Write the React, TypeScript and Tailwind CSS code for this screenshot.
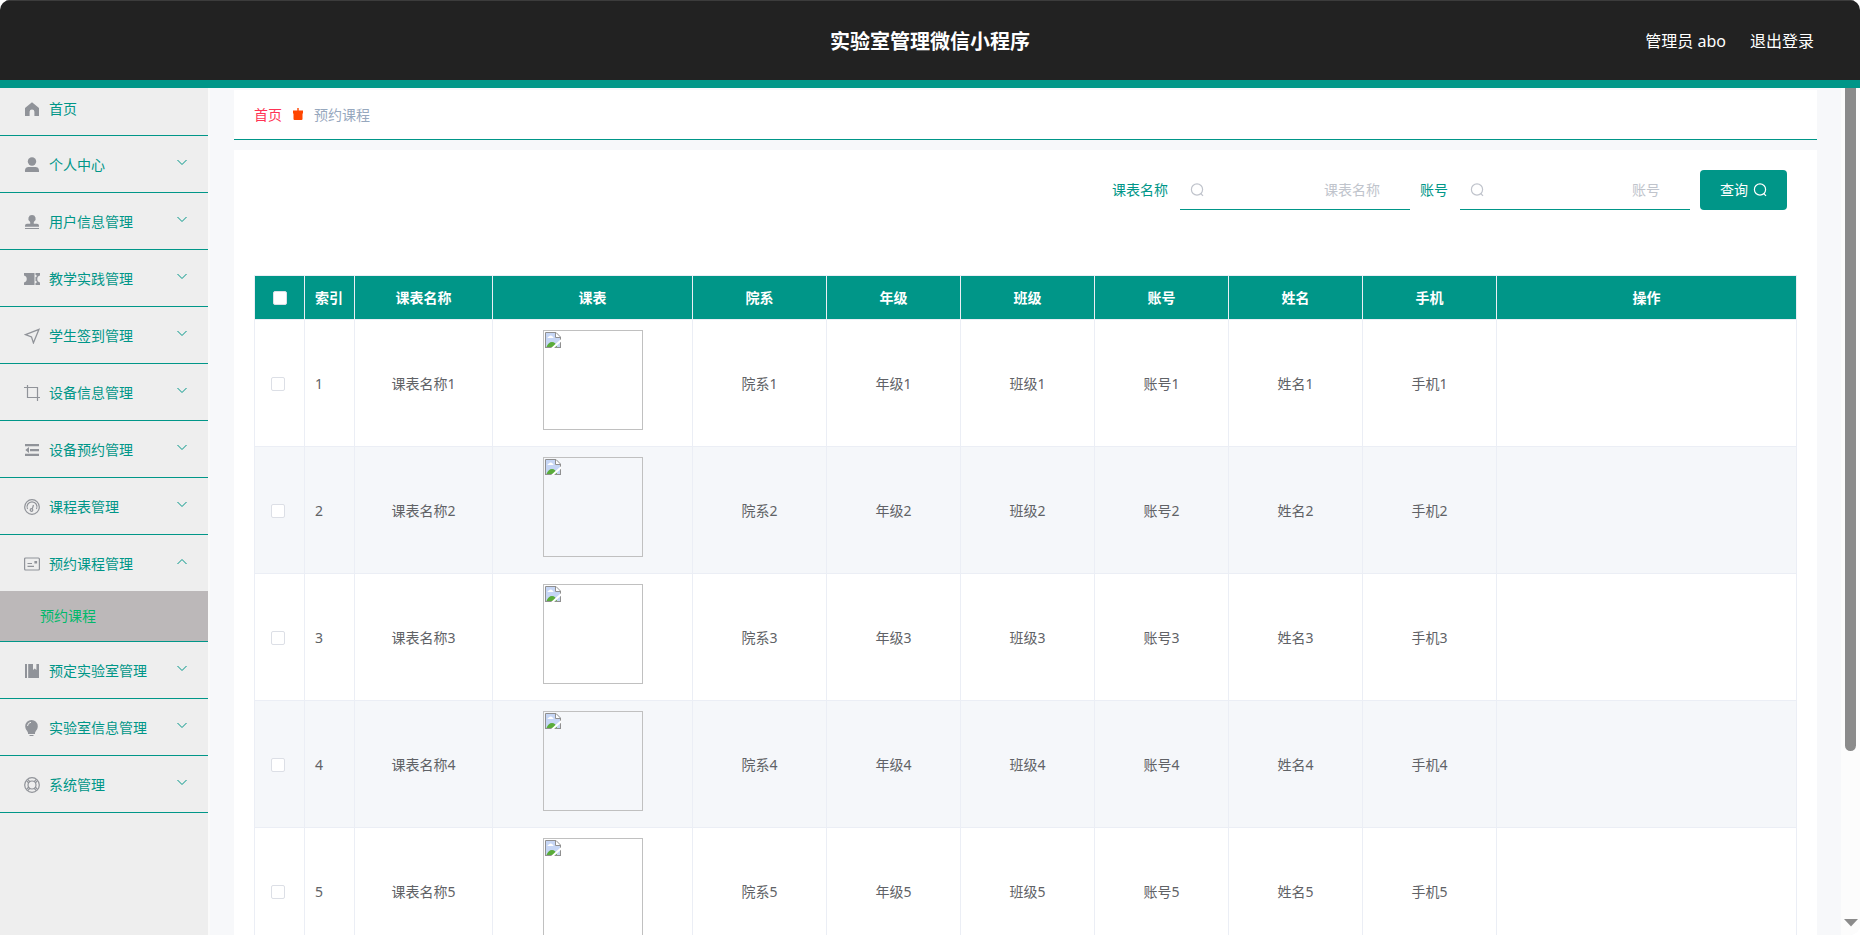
import React, { useState } from 'react';

type IconName =
  | 'home'
  | 'user'
  | 'custom'
  | 'ticket'
  | 'position'
  | 'crop'
  | 'fold'
  | 'odometer'
  | 'postcard'
  | 'management'
  | 'opportunity'
  | 'help';

interface MenuEntry {
  label: string;
  icon: IconName;
  children?: string[];
}

const menu: MenuEntry[] = [
  { label: '个人中心', icon: 'user' },
  { label: '用户信息管理', icon: 'custom' },
  { label: '教学实践管理', icon: 'ticket' },
  { label: '学生签到管理', icon: 'position' },
  { label: '设备信息管理', icon: 'crop' },
  { label: '设备预约管理', icon: 'fold' },
  { label: '课程表管理', icon: 'odometer' },
  { label: '预约课程管理', icon: 'postcard', children: ['预约课程'] },
  { label: '预定实验室管理', icon: 'management' },
  { label: '实验室信息管理', icon: 'opportunity' },
  { label: '系统管理', icon: 'help' },
];

const columns = [
  { label: '课表名称', width: 'w-[138px]' },
  { label: '课表', width: 'w-[200px]' },
  { label: '院系', width: 'w-[134px]' },
  { label: '年级', width: 'w-[134px]' },
  { label: '班级', width: 'w-[134px]' },
  { label: '账号', width: 'w-[134px]' },
  { label: '姓名', width: 'w-[134px]' },
  { label: '手机', width: 'w-[134px]' },
  { label: '操作', width: '' },
];

const rows = [1, 2, 3, 4, 5];

const shapes: Record<IconName, React.ReactNode> = {
  home: <path fill="currentColor" d="M8 1.2 1 7v8h4.6v-4.2a2.4 2.4 0 0 1 4.8 0V15H15V7z" />,
  user: (
    <g fill="currentColor">
      <circle cx="8" cy="4.5" r="4.2" />
      <path d="M1 15v-1.600C1 11.200 2.600 10 4.600 10h6.800c2 0 3.600 1.200 3.600 3.400V15z" />
    </g>
  ),
  custom: (
    <g fill="currentColor">
      <path d="M8 1a3.600 3.600 0 0 1 2.200 6.500c-.5.5-.6 1.300-.4 2.200H13a2 2 0 0 1 2 2v1H1v-1a2 2 0 0 1 2-2h3.200c.2-.9.1-1.700-.4-2.200A3.600 3.600 0 0 1 8 1z" />
      <path d="M1 14h14v1H1z" />
    </g>
  ),
  ticket: (
    <g fill="currentColor">
      <path d="M0 2h10.500v12H0v-2.500a3.600 3.600 0 0 0 0-7z" />
      <path d="M11.500 2H16v2.500a3.600 3.600 0 0 0 0 7V14h-4.500v-2h1v-2h-1V6h1V4h-1z" />
    </g>
  ),
  position: (
    <path fill="none" stroke="currentColor" strokeWidth="1.300" d="M15 1.300 1.500 6.700l6 2.200 1.900 6z" />
  ),
  crop: <path fill="none" stroke="currentColor" strokeWidth="1.200" d="M3.500 0v12.500H16M0 2.500h13.500V16" />,
  fold: (
    <g fill="currentColor">
      <path d="M1 2h14v2.200H1zM6 7h9v2.200H6zM1 11.800h14V14H1zM1.300 8l3.700-3v6z" />
    </g>
  ),
  odometer: (
    <g fill="none" stroke="currentColor" strokeWidth="1.200">
      <circle cx="8" cy="8" r="7.300" />
      <path d="M3.500 10a5 5 0 1 1 9 0" />
      <circle cx="7.500" cy="11" r="1.300" />
      <path d="M8.300 9.800 9.500 6" />
    </g>
  ),
  postcard: (
    <g fill="none" stroke="currentColor" strokeWidth="1.200">
      <rect x=".6" y="2" width="14.800" height="12" rx="1" />
      <path d="M3.500 7.500h4.500M3.500 10.300h6.500" />
      <path fill="currentColor" d="M11 5.500h1.500V7H11z" />
    </g>
  ),
  management: <path fill="currentColor" d="M1 1h2v14H1zM4.200 1H9v6l1.700-1.600L12.400 7V1H15v14H4.200z" />,
  opportunity: (
    <g>
      <path
        fill="currentColor"
        d="M7.500 0a6.300 6.300 0 0 1 6.300 6.300c0 3-1.800 4-2.800 6.400V14H4v-1.300C3 10.300 1.200 9.300 1.200 6.300A6.300 6.300 0 0 1 7.500 0zM5.500 15h4v1h-4z"
      />
      <path fill="none" stroke="#eee" d="M3.500 6a4 4 0 0 1 3.500-3.700" />
    </g>
  ),
  help: (
    <g fill="none" stroke="currentColor" strokeWidth="1.200">
      <circle cx="8" cy="8" r="7.300" />
      <circle cx="8" cy="8" r="4" />
      <path d="m2.700 4 2.200 2M4 2.700l2 2.200M13.300 4l-2.200 2M12 2.700l-2 2.200M2.700 12l2.200-2M4 13.300l2-2.200M13.300 12l-2.200-2M12 13.300l-2-2.200" />
    </g>
  ),
};

const MenuIcon = ({ name }: { name: IconName }) => (
  <svg viewBox="0 0 16 16" className="size-4 shrink-0 text-[#909399]" aria-hidden="true">
    {shapes[name]}
  </svg>
);

const SearchIcon = ({ className }: { className: string }) => (
  <svg
    viewBox="0 0 14 14"
    className={`size-3.5 ${className}`}
    fill="none"
    stroke="currentColor"
    strokeWidth="1.200"
    aria-hidden="true"
  >
    <circle cx="7" cy="6.500" r="5.600" />
    <path d="m10.700 10.500 2.300 2.300" />
  </svg>
);

const Chevron = ({ open }: { open: boolean }) => (
  <svg viewBox="0 0 12 12" className="size-3 mb-1 ml-auto" fill="none" stroke="currentColor" aria-hidden="true">
    <path d={open ? 'M1.500 8 6 3.500 10.500 8' : 'M1.500 3 6 7.500 10.500 3'} />
  </svg>
);

// Placeholder frame for a timetable picture that did not load
const BrokenImage = () => (
  <div className="size-[100px] mx-auto mb-2 p-px border border-[#c0c0c0]">
    <svg viewBox="0 0 16 16" className="size-4" aria-hidden="true">
      <path fill="#c6d6f5" d="M1 1h9.500v4.500H15V15H1z" />
      <path fill="#fff" d="M10.500 1 15 5.500h-4.500z" />
      <path fill="#fff" d="M2.500 6a1.500 1.500 0 0 1 1.500-1.500 2 2 0 0 1 3.500 0A1.500 1.500 0 0 1 8.500 6z" />
      <path fill="#5aac3a" d="M1.500 15c1-3 3-5 5.500-5s4 1.500 5 5z" />
      <path fill="none" stroke="#909090" d="M.5 16V.5H11l4.500 4.500v11M0 15.500h16M10.500.5v5h5" />
      <path stroke="#fff" strokeWidth="2" d="M7 16.500 16.500 8" />
    </svg>
  </div>
);

const Sidebar = () => {
  const [openItem, setOpenItem] = useState('预约课程管理');

  return (
    <nav className="w-[210px] shrink-0 bg-[#eee] border-r-2 border-[#fafafa] text-sm text-[#009688]">
      <ul>
        <li className="border-b border-[#009688]">
          <a href="#home" className="flex items-center h-[47px] pl-6 pb-1.5">
            <MenuIcon name="home" />
            <span className="ml-[9px]">首页</span>
          </a>
        </li>
        {menu.map((item) => {
          const isOpen = item.label === openItem;
          return (
            <li key={item.label} className="border-b border-[#009688]">
              <button
                type="button"
                aria-expanded={isOpen}
                onClick={() => setOpenItem(isOpen ? '' : item.label)}
                className="flex items-center w-full h-14 pl-6 pr-5 pt-0.5"
              >
                <MenuIcon name={item.icon} />
                <span className="ml-[9px]">{item.label}</span>
                <Chevron open={isOpen} />
              </button>
              {isOpen &&
                item.children?.map((child) => (
                  <a
                    key={child}
                    href="#course"
                    className="flex items-center h-[50px] pl-10 bg-[#bcb8b9] text-[#00b96b]"
                  >
                    {child}
                  </a>
                ))}
            </li>
          );
        })}
      </ul>
    </nav>
  );
};

const SearchField = ({ id, label }: { id: string; label: string }) => (
  <div className="flex items-center mr-2.5">
    <label htmlFor={id} className="pr-3 text-[#009688]">
      {label}
    </label>
    <div className="flex items-center w-[230px] h-10 px-2.5 border-b border-[#009688]">
      <SearchIcon className="shrink-0 text-[#c0c4cc]" />
      <input
        id={id}
        type="text"
        placeholder={label}
        className="w-full min-w-0 pr-5 text-right outline-none placeholder:text-[#c0c4cc]"
      />
    </div>
  </div>
);

const CheckBox = ({ label }: { label: string }) => (
  <input
    type="checkbox"
    aria-label={label}
    className="block size-3.5 appearance-none rounded-xs border border-[#dcdfe6] bg-white checked:bg-[#009688]"
  />
);

const CourseTable = () => (
  <table className="w-full table-fixed border-separate border-spacing-0 border-l border-t border-[#ebeef5] text-center text-[#606266]">
    <thead>
      <tr className="h-11 bg-[#009688] text-white">
        <th className="w-[50px] pl-[18px] border-r border-b border-[#ebeef5]">
          <CheckBox label="全选" />
        </th>
        <th className="w-[50px] pl-2.5 text-left border-r border-b border-[#ebeef5]">索引</th>
        {columns.map((col) => (
          <th key={col.label} className={`border-r border-b border-[#ebeef5] ${col.width}`}>
            {col.label}
          </th>
        ))}
      </tr>
    </thead>
    <tbody>
      {rows.map((n) => (
        <tr key={n} className="h-[127px] even:bg-[#f5f7fa]">
          <td className="pl-4 pt-0.5 border-r border-b border-[#ebeef5]">
            <CheckBox label={`选择第${n}行`} />
          </td>
          <td className="pl-2.5 pt-0.5 text-left border-r border-b border-[#ebeef5]">{n}</td>
          {columns.map((col) => (
            <td key={col.label} className="pt-0.5 border-r border-b border-[#ebeef5]">
              {col.label === '课表' && <BrokenImage />}
              {col.label !== '课表' && col.label !== '操作' && `${col.label}${n}`}
            </td>
          ))}
        </tr>
      ))}
    </tbody>
  </table>
);

const Header = () => (
  <header className="grid grid-cols-3 items-center h-[88px] shrink-0 bg-[#222] border-t border-t-[#3c3c3c] border-b-8 border-b-[#009688] text-white">
    <h1 className="col-start-2 pt-0.5 text-center text-xl font-bold">实验室管理微信小程序</h1>
    <div className="flex justify-end gap-6 pr-[46px] text-base">
      <span>管理员 abo</span>
      <button type="button">退出登录</button>
    </div>
  </header>
);

const App: React.FC = () => {
  return (
    <div className="h-screen bg-white">
      <div className="flex flex-col h-full overflow-hidden rounded-t-[10px] rounded-br-[10px] bg-[#f7f8fa] font-['Noto_Sans','Noto_Sans_CJK_SC',sans-serif] text-sm">
        <Header />
        <div className="flex flex-1 min-h-0">
          <Sidebar />
          <main className="flex-1 min-w-0 px-6 pt-0.5 overflow-hidden">
            <div className="flex items-center h-[50px] px-5 pt-px bg-white border-b border-[#009688]">
              <a href="#home" className="text-[#ff3355]">
                首页
              </a>
              <svg viewBox="0 0 12 14" className="w-3 h-3.5 mx-2.5" fill="#ff4500" aria-hidden="true">
                <path d="M5.300 0h1.400v2.500H11v3h-.5V11a1 1 0 0 1-1 1h-7a1 1 0 0 1-1-1V5.500H1v-3h4.300z" />
              </svg>
              <span className="text-[#97a8be]">预约课程</span>
            </div>

            <div className="mt-2.5 p-5 bg-white">
              <form className="flex justify-end pr-2.5" onSubmit={(e) => e.preventDefault()}>
                <SearchField id="course-name" label="课表名称" />
                <SearchField id="account" label="账号" />
                <button
                  type="submit"
                  className="flex items-center gap-[5px] h-10 px-5 rounded bg-[#009688] text-white"
                >
                  查询
                  <SearchIcon className="" />
                </button>
              </form>
              <div className="mt-[65px]">
                <CourseTable />
              </div>
            </div>
          </main>
          {/* scroll track */}
          <div className="flex flex-col items-center w-[19px] shrink-0 pb-2 bg-[#fcfcfc]" aria-hidden="true">
            <div className="w-[11px] h-[79%] rounded-b-full bg-[#8b8b8b]" />
            <svg viewBox="0 0 14 8" className="w-3.5 h-2 mt-auto" fill="#8b8b8b">
              <path d="M0 0h14L7 7.500z" />
            </svg>
          </div>
        </div>
      </div>
    </div>
  );
};

export default App;
